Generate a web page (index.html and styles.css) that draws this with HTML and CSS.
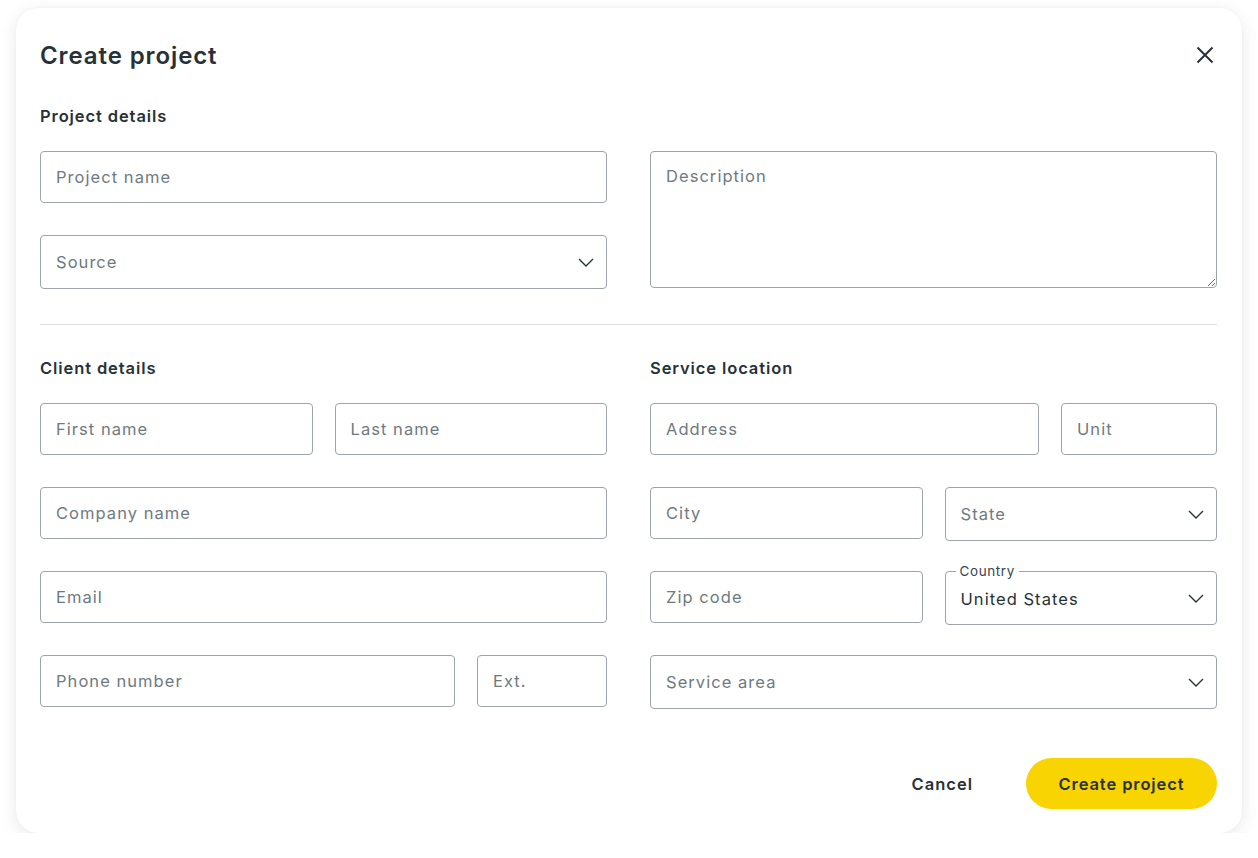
FILE: index.html
```html
<!DOCTYPE html>
<html lang="en">
<head>
  <meta charset="UTF-8" />
  <meta name="viewport" content="width=device-width, initial-scale=1.0" />
  <title>Create project</title>
  <link rel="stylesheet" href="styles.css">
</head>
<body>
  <div class="modal">
    <div class="modal-header">
      <h1>Create project</h1>
      <button class="close-btn" aria-label="Close">
        <svg width="18" height="18" viewBox="0 0 18 18"><path d="M1.5 1.5 L16.5 16.5 M16.5 1.5 L1.5 16.5" stroke="#263238" stroke-width="2" fill="none"/></svg>
      </button>
    </div>

    <h2 class="section-title">Project details</h2>
    <div class="two-col">
      <div class="col">
        <input class="field" type="text" placeholder="Project name" />
        <div class="select">
          <span class="placeholder">Source</span>
          <svg class="chevron" width="16" height="9" viewBox="0 0 16 9"><path d="M1 1 L8 8 L15 1" stroke="#263238" stroke-width="1.4" fill="none"/></svg>
        </div>
      </div>
      <textarea class="field description" placeholder="Description"></textarea>
    </div>

    <hr class="divider" />

    <div class="two-col">
      <div>
        <h2 class="section-title">Client details</h2>
        <div class="rows">
          <div class="row half">
            <input class="field" type="text" placeholder="First name" />
            <input class="field" type="text" placeholder="Last name" />
          </div>
          <input class="field" type="text" placeholder="Company name" />
          <input class="field" type="text" placeholder="Email" />
          <div class="row phone">
            <input class="field" type="text" placeholder="Phone number" />
            <input class="field" type="text" placeholder="Ext." />
          </div>
        </div>
      </div>
      <div>
        <h2 class="section-title">Service location</h2>
        <div class="rows">
          <div class="row address">
            <input class="field" type="text" placeholder="Address" />
            <input class="field" type="text" placeholder="Unit" />
          </div>
          <div class="row half">
            <input class="field" type="text" placeholder="City" />
            <div class="select">
              <span class="placeholder">State</span>
              <svg class="chevron" width="16" height="9" viewBox="0 0 16 9"><path d="M1 1 L8 8 L15 1" stroke="#263238" stroke-width="1.4" fill="none"/></svg>
            </div>
          </div>
          <div class="row half">
            <input class="field" type="text" placeholder="Zip code" />
            <fieldset class="select filled">
              <legend>Country</legend>
              <span class="value">United States</span>
              <svg class="chevron" width="16" height="9" viewBox="0 0 16 9"><path d="M1 1 L8 8 L15 1" stroke="#263238" stroke-width="1.4" fill="none"/></svg>
            </fieldset>
          </div>
          <div class="select">
            <span class="placeholder">Service area</span>
            <svg class="chevron" width="16" height="9" viewBox="0 0 16 9"><path d="M1 1 L8 8 L15 1" stroke="#263238" stroke-width="1.4" fill="none"/></svg>
          </div>
        </div>
      </div>
    </div>

    <div class="modal-footer">
      <button class="btn-cancel">Cancel</button>
      <button class="btn-primary">Create project</button>
    </div>
  </div>
</body>
</html>
```

FILE: styles.css
```css
* {
  margin: 0;
  padding: 0;
  box-sizing: border-box;
}
body {
  font-family: "Inter", "Open Sans", sans-serif;
  background: #fff;
  color: #263238;
  padding: 8px 16px 0 16px;
}
.modal {
  width: 1226px;
  height: 825px;
  background: #fff;
  border-radius: 22px;
  box-shadow: 0 4px 18px rgba(0, 0, 0, 0.09), 0 0 3px rgba(0, 0, 0, 0.04);
  padding: 30px 25px 24px 24px;
}
.modal-header {
  display: flex;
  justify-content: space-between;
  align-items: center;
  height: 34px;
}
.modal-header h1 {
  font-size: 24px;
  font-weight: 600;
  letter-spacing: 0.9px;
  color: #263238;
}
.close-btn {
  background: none;
  border: none;
  width: 18px;
  height: 18px;
  margin-right: 3px;
  cursor: pointer;
  display: flex;
}
.section-title {
  font-size: 16.5px;
  font-weight: 600;
  letter-spacing: 0.9px;
  color: #263238;
  line-height: 20px;
  margin: 34px 0 25px;
}
.two-col {
  display: grid;
  grid-template-columns: 567px 567px;
  column-gap: 43px;
}
.col {
  display: flex;
  flex-direction: column;
  gap: 32px;
}
.field {
  font-family: inherit;
  font-size: 16.5px;
  letter-spacing: 1.05px;
  color: #263238;
  height: 52px;
  width: 100%;
  padding: 0 15px;
  border: 1px solid #9ea5aa;
  border-radius: 4px;
  background: #fff;
  outline: none;
}
.field::placeholder {
  color: #6e7a81;
}
.description {
  height: 137px;
  padding: 13px 15px;
  resize: vertical;
  line-height: 22px;
}
.select {
  position: relative;
  height: 54px;
  border: 1px solid #9ea5aa;
  border-radius: 4px;
  display: flex;
  align-items: center;
  padding: 0 15px;
  font-size: 16.5px;
  letter-spacing: 1.05px;
}
.select .placeholder {
  color: #6e7a81;
}
.select .chevron {
  position: absolute;
  right: 12px;
  top: 50%;
  margin-top: -4px;
}
.select.filled {
  min-width: 0;
  padding: 0 15px;
  margin-top: -8px;
  height: 62px;
}
.select.filled legend {
  font-size: 13.5px;
  letter-spacing: 0.6px;
  color: #37474f;
  padding: 0 4px;
  margin-left: -5px;
  line-height: 16px;
}
.select.filled .value {
  color: #263238;
  margin-top: -6px;
}
.select.filled .chevron {
  margin-top: -8px;
}
.divider {
  border: none;
  border-top: 1px solid #dcdfe1;
  margin: 35px 0 0;
}
.two-col .section-title {
  margin-top: 33px;
}
.rows {
  display: grid;
  grid-auto-rows: 52px;
  row-gap: 32px;
}
.row {
  display: grid;
  column-gap: 22px;
  align-items: start;
}
.row.half {
  grid-template-columns: 1fr 1fr;
}
.row.phone {
  grid-template-columns: 1fr 130px;
}
.row.address {
  grid-template-columns: 1fr 156px;
}
.modal-footer {
  display: flex;
  justify-content: flex-end;
  align-items: center;
  gap: 53px;
  margin-top: 51px;
}
.btn-cancel {
  background: none;
  border: none;
  font-family: inherit;
  font-size: 16.5px;
  font-weight: 600;
  letter-spacing: 1px;
  color: #263238;
  cursor: pointer;
}
.btn-primary {
  background: #f9d403;
  border: none;
  border-radius: 26px;
  height: 51px;
  width: 191px;
  font-family: inherit;
  font-size: 16.5px;
  font-weight: 600;
  letter-spacing: 0.9px;
  color: #263238;
  cursor: pointer;
}
```
